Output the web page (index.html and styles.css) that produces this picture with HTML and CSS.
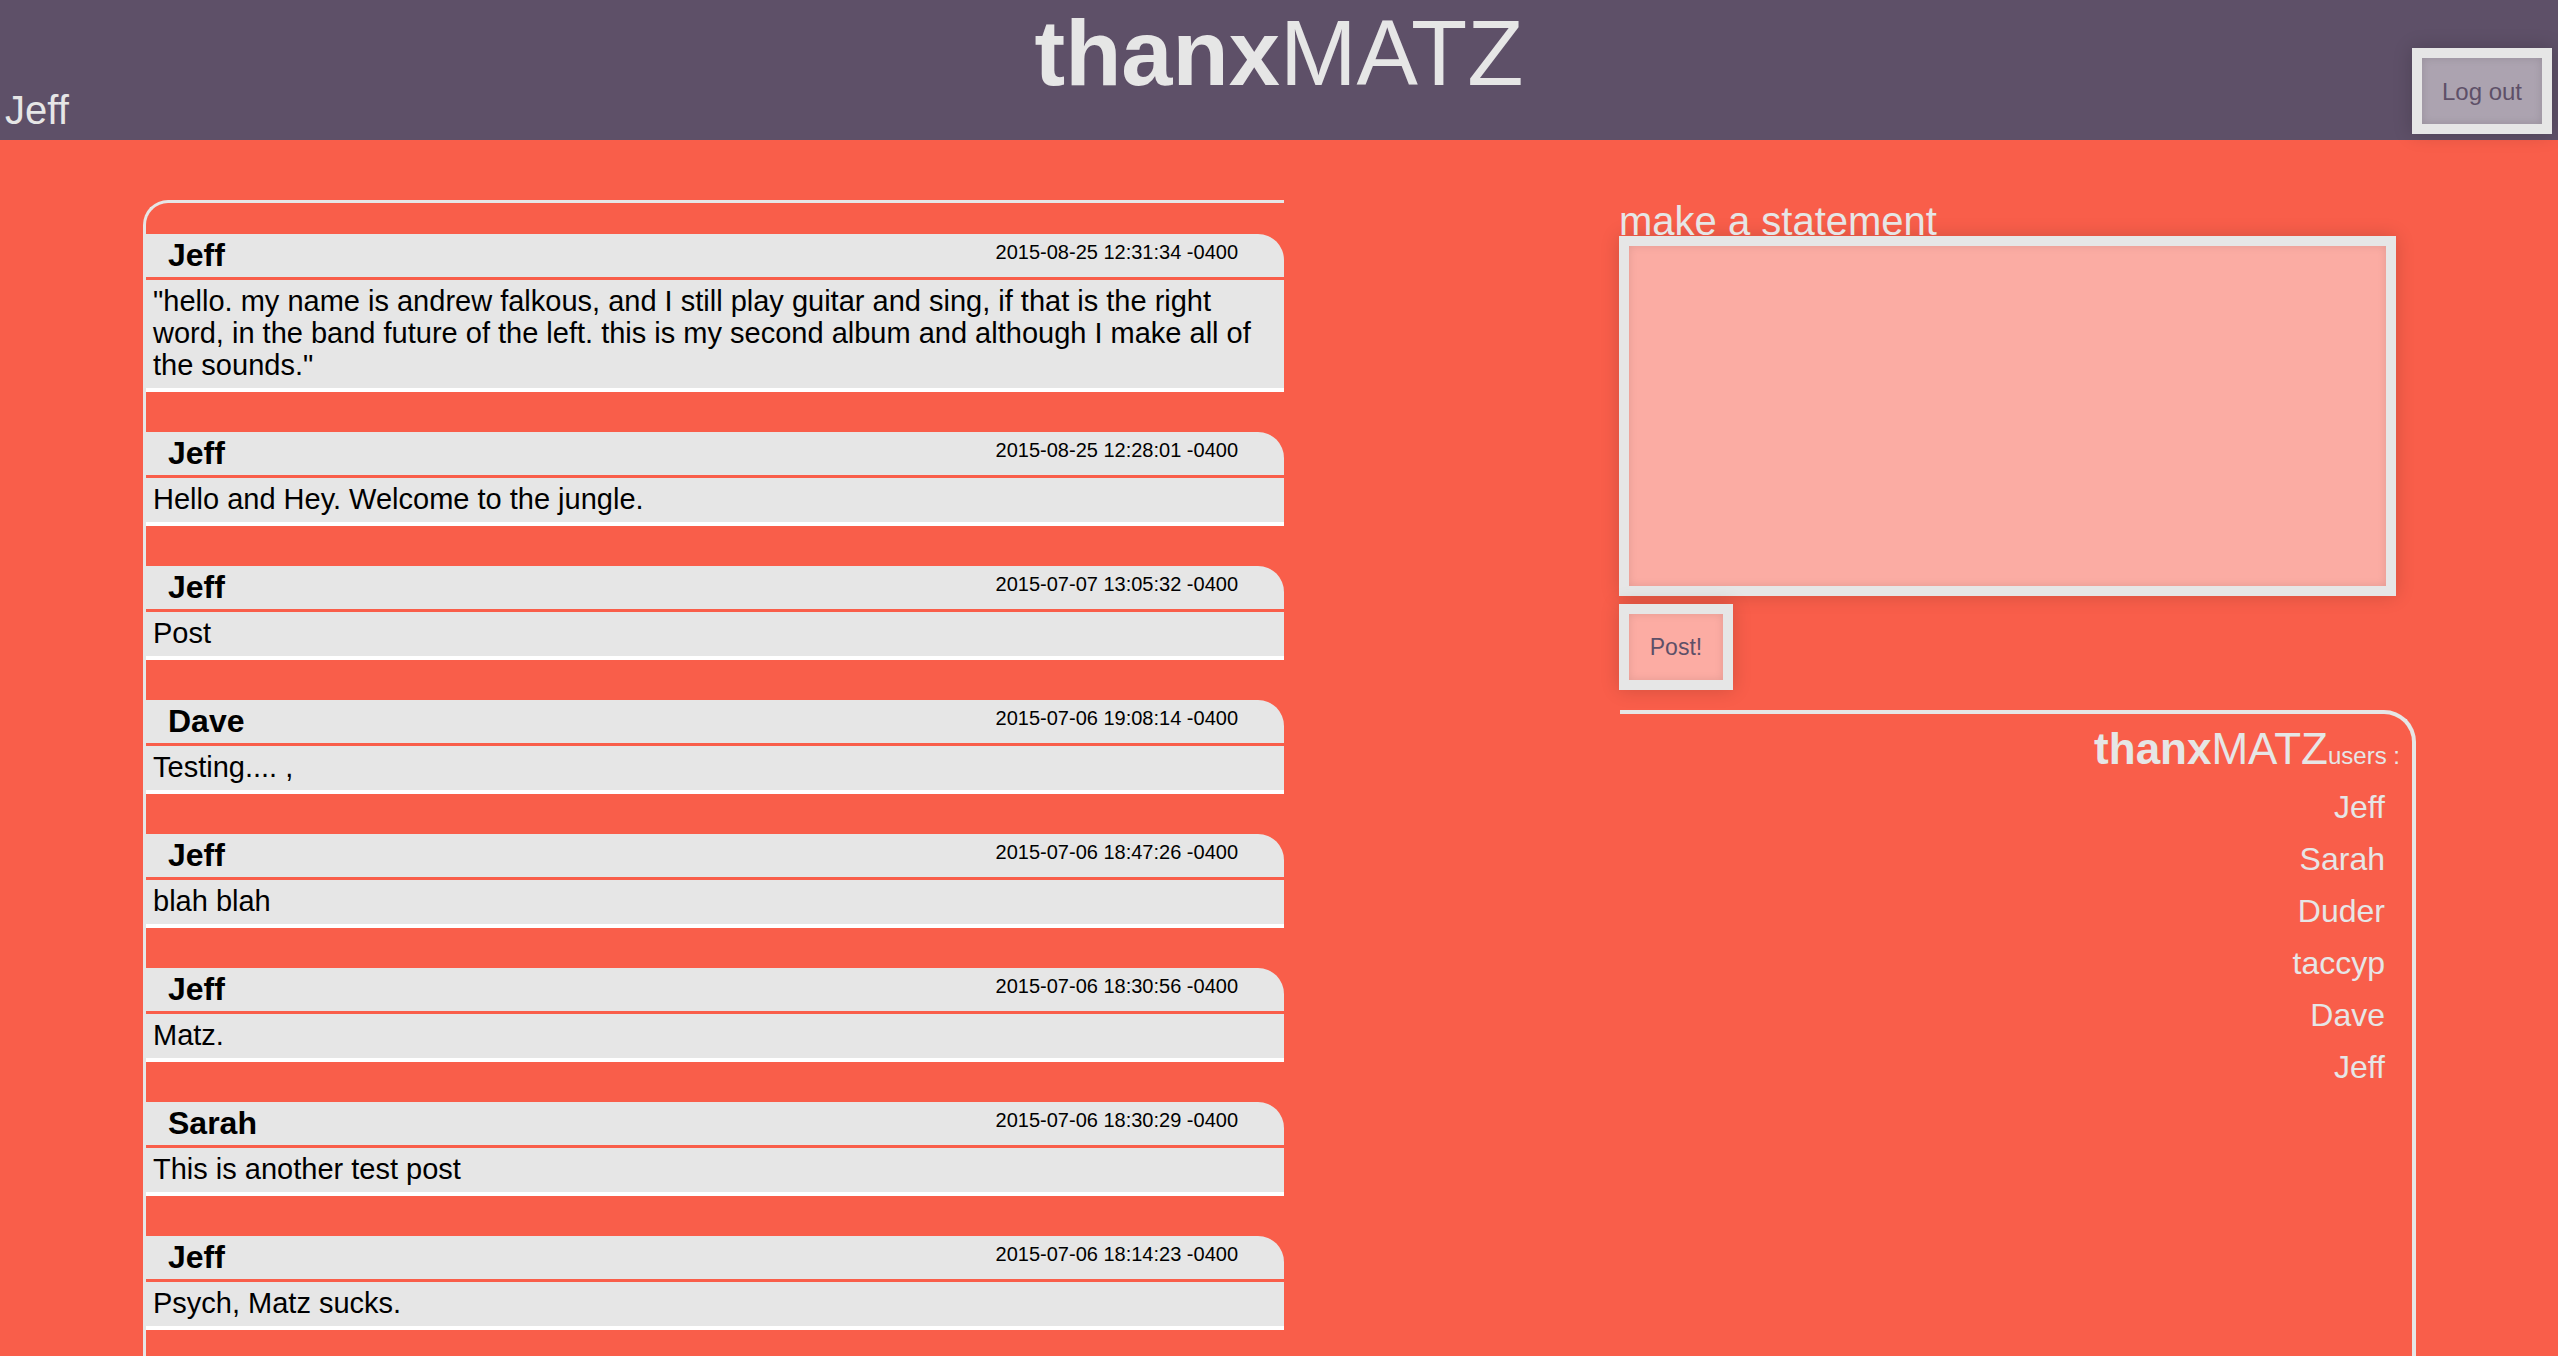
FILE: index.html
```html
<!DOCTYPE html>
<html lang="en">
<head>
<meta charset="utf-8">
<title>thanxMATZ</title>
<link rel="stylesheet" href="styles.css">
</head>
<body>
<header class="topbar">
  <div class="current-user">Jeff</div>
  <h1 class="brand"><b>thanx</b>MATZ</h1>
  <button class="logout" type="button">Log out</button>
</header>
<main class="page">
  <section class="feed">
    <article class="post">
      <div class="post-head"><span class="author">Jeff</span><span class="stamp">2015-08-25 12:31:34 -0400</span></div>
      <div class="post-body">"hello. my name is andrew falkous, and I still play guitar and sing, if that is the right word, in the band future of the left. this is my second album and although I make all of the sounds."</div>
    </article>
    <article class="post">
      <div class="post-head"><span class="author">Jeff</span><span class="stamp">2015-08-25 12:28:01 -0400</span></div>
      <div class="post-body">Hello and Hey. Welcome to the jungle.</div>
    </article>
    <article class="post">
      <div class="post-head"><span class="author">Jeff</span><span class="stamp">2015-07-07 13:05:32 -0400</span></div>
      <div class="post-body">Post</div>
    </article>
    <article class="post">
      <div class="post-head"><span class="author">Dave</span><span class="stamp">2015-07-06 19:08:14 -0400</span></div>
      <div class="post-body">Testing.... ,</div>
    </article>
    <article class="post">
      <div class="post-head"><span class="author">Jeff</span><span class="stamp">2015-07-06 18:47:26 -0400</span></div>
      <div class="post-body">blah blah</div>
    </article>
    <article class="post">
      <div class="post-head"><span class="author">Jeff</span><span class="stamp">2015-07-06 18:30:56 -0400</span></div>
      <div class="post-body">Matz.</div>
    </article>
    <article class="post">
      <div class="post-head"><span class="author">Sarah</span><span class="stamp">2015-07-06 18:30:29 -0400</span></div>
      <div class="post-body">This is another test post</div>
    </article>
    <article class="post">
      <div class="post-head"><span class="author">Jeff</span><span class="stamp">2015-07-06 18:14:23 -0400</span></div>
      <div class="post-body">Psych, Matz sucks.</div>
    </article>
  </section>
  <aside class="side">
    <form class="composer">
      <label class="composer-label" for="statement">make a statement</label>
      <textarea class="composer-text" id="statement"></textarea>
      <button class="post-btn" type="button">Post!</button>
    </form>
    <section class="users">
      <h2 class="users-title"><b>thanx</b>MATZ<small>users :</small></h2>
      <ul class="users-list">
        <li>Jeff</li>
        <li>Sarah</li>
        <li>Duder</li>
        <li>taccyp</li>
        <li>Dave</li>
        <li>Jeff</li>
      </ul>
    </section>
  </aside>
</main>
</body>
</html>
```

FILE: styles.css
```css
html, body {
  margin: 0;
  padding: 0;
}

body {
  background: #f95e4a;
  font-family: "Liberation Sans", Arial, Helvetica, sans-serif;
  color: #000;
  overflow: hidden;
  height: 1356px;
}

.topbar {
  height: 140px;
  background: #5e5068;
  display: grid;
  grid-template-columns: 1fr auto 1fr;
  color: #e6e6e6;
}

.current-user {
  align-self: end;
  justify-self: start;
  font-size: 40px;
  line-height: 46px;
  padding: 0 0 7px 5px;
}

.brand {
  margin: 3px 0 0;
  font-size: 92px;
  line-height: 100px;
  font-weight: normal;
  color: #e6e6e6;
}

.brand b {
  font-weight: bold;
}

.logout {
  justify-self: end;
  align-self: start;
  margin: 48px 6px 0 0;
  width: 140px;
  height: 86px;
  border: 10px solid #e6e6e6;
  background: #aca3b0;
  color: #5e5068;
  font-family: "Liberation Sans", Arial, Helvetica, sans-serif;
  font-size: 24px;
  padding: 2px 0 0;
  box-shadow: 0 0 18px rgba(0, 0, 0, 0.18), inset 0 0 8px rgba(0, 0, 0, 0.12);
}

.page {
  display: flex;
  align-items: flex-start;
  padding-top: 60px;
}

.feed {
  margin-left: 143px;
  width: 1141px;
  box-sizing: border-box;
  border-top: 3px solid #e6e6e6;
  border-left: 3px solid #e6e6e6;
  border-top-left-radius: 25px;
  padding-top: 31px;
  min-height: 1300px;
}

.post {
  margin-bottom: 40px;
}

.post-head {
  height: 43px;
  background: #e6e6e6;
  border-bottom: 3px solid #f95e4a;
  border-top-right-radius: 26px;
  display: flex;
  justify-content: space-between;
  align-items: flex-start;
  padding: 0 46px 0 22px;
}

.author {
  font-size: 32px;
  font-weight: bold;
  line-height: 43px;
}

.stamp {
  font-size: 20px;
  line-height: 23px;
  padding-top: 7px;
}

.post-body {
  background: #e6e6e6;
  border-bottom: 4px solid #ffffff;
  font-size: 29px;
  line-height: 32px;
  padding: 5px 30px 7px 7px;
}

.side {
  margin-left: 335px;
  width: 797px;
  display: flex;
  flex-direction: column;
}

.composer {
  display: flex;
  flex-direction: column;
  align-items: flex-start;
  margin: 0;
}

.composer-label {
  display: block;
  margin-top: 5px;
  margin-bottom: -2px;
  font-size: 40px;
  line-height: 33px;
  color: #e6e6e6;
  position: relative;
  z-index: 1;
}

.composer-text {
  display: block;
  box-sizing: border-box;
  width: 777px;
  height: 360px;
  margin: 0;
  border: 10px solid #e6e6e6;
  background: #fbaca3;
  resize: none;
  box-shadow: 0 0 18px rgba(0, 0, 0, 0.16), inset 0 0 8px rgba(0, 0, 0, 0.1);
}

.post-btn {
  margin-top: 8px;
  width: 114px;
  height: 86px;
  box-sizing: border-box;
  border: 10px solid #e6e6e6;
  background: #fcaca3;
  color: #5e5068;
  font-family: "Liberation Sans", Arial, Helvetica, sans-serif;
  font-size: 23px;
  padding: 0;
  box-shadow: 0 0 18px rgba(0, 0, 0, 0.16), inset 0 0 8px rgba(0, 0, 0, 0.1);
}

.users {
  margin-top: 20px;
  margin-left: 1px;
  width: 796px;
  box-sizing: border-box;
  border-top: 4px solid #e6e6e6;
  border-right: 4px solid #e6e6e6;
  border-top-right-radius: 32px;
  min-height: 700px;
  color: #e6e6e6;
  text-align: right;
}

.users-title {
  margin: 10px 12px 0 0;
  font-size: 44px;
  line-height: 50px;
  font-weight: normal;
}

.users-title b {
  font-weight: bold;
}

.users-title small {
  font-size: 24px;
}

.users-list {
  list-style: none;
  margin: 0 27px 0 0;
  padding: 0;
  font-size: 32px;
  line-height: 52px;
}
```
